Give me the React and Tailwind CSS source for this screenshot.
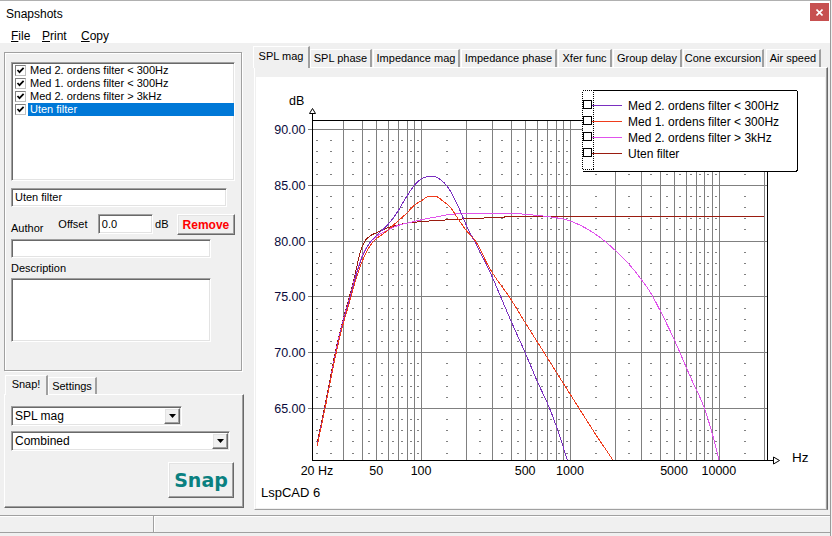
import React from "react";

const L20 = Math.log10(20);
const X = (f) => 317 + (Math.log10(f) - L20) * 148.9;
const Y = (d) => 129.5 + (90 - d) * 11.16;

function curvePath(pts) {
  const xs = pts.map((p) => X(p[0]));
  const ys = pts.map((p) => Y(p[1]));
  const n = xs.length;
  const d = [];
  for (let i = 0; i < n - 1; i++) d.push((ys[i + 1] - ys[i]) / (xs[i + 1] - xs[i]));
  const m = new Array(n);
  m[0] = d[0];
  m[n - 1] = d[n - 2];
  for (let i = 1; i < n - 1; i++) m[i] = d[i - 1] * d[i] <= 0 ? 0 : (d[i - 1] + d[i]) / 2;
  for (let i = 0; i < n - 1; i++) {
    if (d[i] === 0) {
      m[i] = 0;
      m[i + 1] = 0;
      continue;
    }
    const a = m[i] / d[i];
    const b = m[i + 1] / d[i];
    const h = a * a + b * b;
    if (h > 9) {
      const t = 3 / Math.sqrt(h);
      m[i] = t * a * d[i];
      m[i + 1] = t * b * d[i];
    }
  }
  let s = "";
  for (let i = 0; i < n - 1; i++) {
    const h = xs[i + 1] - xs[i];
    const steps = Math.max(2, Math.ceil(h / 0.5));
    for (let k = i === 0 ? 0 : 1; k <= steps; k++) {
      const t = k / steps;
      const t2 = t * t;
      const t3 = t2 * t;
      const y =
        (2 * t3 - 3 * t2 + 1) * ys[i] +
        (t3 - 2 * t2 + t) * h * m[i] +
        (-2 * t3 + 3 * t2) * ys[i + 1] +
        (t3 - t2) * h * m[i + 1];
      const x = xs[i] + t * h;
      s += (s ? "L" : "M") + x.toFixed(2) + "," + y.toFixed(2);
    }
  }
  return s;
}

const UTEN = [
  [20, 61.8], [22, 64.5], [24, 67], [26.5, 70], [30, 73], [33, 75], [36, 77], [39, 79], [42, 80],
  [46, 80.5], [50, 80.75], [60, 81.2], [70, 81.45], [80, 81.6], [100, 81.75], [130, 81.85],
  [200, 82.0], [300, 82.1], [450, 82.2], [1000, 82.2], [2000, 82.2], [5000, 82.2], [10000, 82.2], [20000, 82.2],
];
const MAG = [
  [20, 61.7], [22, 64.3], [24, 66.8], [26.5, 69.8], [30, 72.9], [33, 74.8], [36, 76.7], [40, 78.6],
  [45, 79.8], [50, 80.4], [60, 81.0], [70, 81.4], [80, 81.6], [100, 81.9], [130, 82.2], [160, 82.4],
  [250, 82.5], [400, 82.5], [500, 82.4], [600, 82.3], [800, 82.1], [1000, 81.8], [1300, 81.1],
  [1600, 80.3], [2000, 79.2], [2500, 77.9], [3000, 76.6], [3500, 75.3], [4200, 73.3], [5000, 71.2],
  [6400, 67.9], [8000, 65.0], [9000, 62.8], [10000, 60.4], [10300, 59.7],
];
const PURPLE = [
  [20, 61.7], [22, 64.3], [24, 66.8], [26.5, 69.7], [30, 72.8], [33, 74.7], [36, 76.6], [40, 78.5],
  [45, 79.8], [50, 80.5], [55, 81.0], [60, 81.5], [70, 82.7], [80, 84.0], [93, 85.2], [105, 85.7],
  [120, 85.8], [135, 85.5], [150, 84.9], [160, 84.3], [175, 83.3], [190, 82.2], [200, 81.5],
  [230, 79.9], [277, 77.8], [300, 76.8], [400, 72.9], [500, 70.0], [600, 67.5], [730, 65],
  [850, 62.6], [960, 60.4], [1000, 59.8],
];
const RED = [
  [20, 61.6], [22, 64.2], [24, 66.7], [26.5, 69.6], [30, 72.6], [33, 74.5], [36, 76.3], [40, 78.1],
  [45, 79.5], [50, 80.2], [55, 80.6], [60, 81.0], [70, 81.8], [80, 82.5], [90, 83.2], [100, 83.6],
  [113, 84.0], [125, 84.0], [140, 83.6], [160, 82.9], [175, 82.1], [200, 81.0], [240, 79.7],
  [277, 78.0], [300, 77.2], [400, 74.8], [500, 72.7], [700, 69.6], [841, 67.9], [1153, 65],
  [1500, 62.6], [1936, 60.4], [2000, 60.1],
];

const C_PURPLE = "#7a2fc0";
const C_RED = "#ef3c1c";
const C_MAG = "#e052ec";
const C_UTEN = "#9a1c10";

const vLines = [30, 40, 50, 60, 70, 80, 90, 100, 200, 300, 400, 500, 600, 700, 800, 900, 1000,
  2000, 3000, 4000, 5000, 6000, 7000, 8000, 9000, 10000, 20000];
const dotCols = [20, 25, 35, 45, 55, 65, 75, 85, 95, 150, 250, 350, 450, 550, 650, 750, 850, 950,
  1500, 2500, 3500, 4500, 5500, 6500, 7500, 8500, 9500, 15000];
const majorDb = [90, 85, 80, 75, 70, 65];
const dotRows = [];
for (let d = 61; d <= 89; d++) if (d % 5 !== 0) dotRows.push(d);

const xLabels = [
  [20, "20 Hz"], [50, "50"], [100, "100"], [500, "500"], [1000, "1000"], [5000, "5000"], [10000, "10000"],
];

const legend = [
  [105, C_PURPLE, "Med 2. ordens filter < 300Hz"],
  [121, C_RED, "Med 1. ordens filter < 300Hz"],
  [137, C_MAG, "Med 2. ordens filter > 3kHz"],
  [153, C_UTEN, "Uten filter"],
];

function Chart() {
  const px = (v) => Math.round(v) + 0.5;
  const fy = (d) => Math.floor(Y(d)) + 0.5;
  return (
    <svg width="569" height="431" viewBox="256 77 569 431" className="block">
      <defs>
        <clipPath id="plot">
          <rect x="312" y="120" width="456" height="340" />
        </clipPath>
      </defs>
      <g shapeRendering="crispEdges">
        {dotCols.map((f) =>
          dotRows.map((d) => (
            <rect key={f + "-" + d} x={Math.round(X(f)) - 1} y={Math.floor(Y(d))} width="2" height="1" fill="#808080" />
          ))
        )}
        {vLines.map((f) => (
          <line key={f} x1={px(X(f))} x2={px(X(f))} y1="120" y2="460" stroke="#808080" strokeWidth="1" />
        ))}
        {majorDb.map((d) => (
          <line key={d} x1="308" x2="768" y1={fy(d)} y2={fy(d)} stroke="#808080" strokeWidth="1" />
        ))}
        <line x1="312" x2="768" y1="120.5" y2="120.5" stroke="#000" strokeWidth="1" />
        <line x1="767.5" x2="767.5" y1="120" y2="460" stroke="#000" strokeWidth="1" />
      </g>
      <g clipPath="url(#plot)" fill="none" strokeWidth="1" shapeRendering="crispEdges">
        <path d={curvePath(UTEN)} stroke={C_UTEN} />
        <path d={curvePath(MAG)} stroke={C_MAG} />
        <path d={curvePath(PURPLE)} stroke={C_PURPLE} />
        <path d={curvePath(RED)} stroke={C_RED} />
      </g>
      <g shapeRendering="crispEdges">
        <line x1="312.5" x2="312.5" y1="113" y2="461" stroke="#000" strokeWidth="1" />
        <line x1="312" x2="773" y1="460.5" y2="460.5" stroke="#000" strokeWidth="1" />
      </g>
      <polygon points="312.5,108.5 309.5,113.5 315.5,113.5" fill="#fff" stroke="#000" strokeWidth="1" />
      <polygon points="773.5,457 779.5,460.5 773.5,464" fill="#fff" stroke="#000" strokeWidth="1" />
      <g fontFamily="'Liberation Sans', Arial, sans-serif">
        <text x="289" y="105" fontSize="12.5" fill="#000">dB</text>
        <text x="792" y="462" fontSize="13.5" fill="#000">Hz</text>
        {majorDb.map((d) => (
          <text key={d} x="305.5" y={Y(d) + 4.5} fontSize="12.5" textAnchor="end" fill="#0a0a3c">
            {d.toFixed(2)}
          </text>
        ))}
        {xLabels.map(([f, t]) => (
          <text key={f} x={X(f)} y="474.5" fontSize="12.5" textAnchor="middle" fill="#000">
            {t}
          </text>
        ))}
        <text x="261" y="497" fontSize="13" fill="#000">LspCAD 6</text>
      </g>
      <g shapeRendering="crispEdges">
        <rect x="583" y="91" width="214" height="80" rx="3" fill="#fff" />
        <path d="M594,90.5 H795 Q797.5,90.5 797.5,93 V169 Q797.5,171.5 795,171.5 H583" fill="none" stroke="#000" strokeWidth="1" />
        <rect x="582.5" y="90.5" width="11" height="79" fill="none" stroke="#000" strokeWidth="1" strokeDasharray="1 1" />
        {legend.map(([c, col]) => (
          <g key={c}>
            <rect x="583.5" y={c - 4.5} width="8" height="8" fill="#fff" stroke="#000" strokeWidth="1" />
            <line x1="592" x2="622" y1={c + 0.5} y2={c + 0.5} stroke={col} strokeWidth="1" />
          </g>
        ))}
      </g>
      <g fontFamily="'Liberation Sans', Arial, sans-serif" fontSize="12">
        {legend.map(([c, , t]) => (
          <text key={c} x="628" y={c + 4.5} fill="#000">
            {t}
          </text>
        ))}
      </g>
    </svg>
  );
}

const sunken =
  "border border-t-[#a0a0a0] border-l-[#a0a0a0] border-b-white border-r-white shadow-[inset_1px_1px_0_#696969,inset_-1px_-1px_0_#e3e3e3]";
const raised =
  "border border-t-white border-l-white border-b-[#696969] border-r-[#696969] shadow-[inset_-1px_-1px_0_#a0a0a0,inset_1px_1px_0_#e3e3e3]";

function CheckBox() {
  return (
    <div className="w-[11px] h-[11px] bg-white border border-t-[#808080] border-l-[#808080] border-b-[#c0c0c0] border-r-[#c0c0c0] flex items-center justify-center shrink-0">
      <svg width="9" height="9" viewBox="0 0 9 9">
        <path d="M1.5 4 L3.5 6.2 L7.6 1.8" fill="none" stroke="#000" strokeWidth="1.7" />
      </svg>
    </div>
  );
}

function DropBtn() {
  return (
    <div className={"w-[16px] h-[16px] bg-[#f0f0f0] flex items-center justify-center " + raised}>
      <svg width="7" height="4" viewBox="0 0 7 4">
        <path d="M0 0 H7 L3.5 4 Z" fill="#000" />
      </svg>
    </div>
  );
}

const items = [
  "Med 2. ordens filter < 300Hz",
  "Med 1. ordens filter < 300Hz",
  "Med 2. ordens filter > 3kHz",
  "Uten filter",
];

const tabs = [
  ["SPL mag", 57, 0],
  ["SPL phase", 62, 0],
  ["Impedance mag", 87, 1],
  ["Impedance phase", 96, 1],
  ["Xfer func", 54, 1],
  ["Group delay", 69, 1],
  ["Cone excursion", 81, 1],
  ["Air speed", 55, 2],
];

export default function App() {
  return (
    <div className="w-[832px] h-[536px] bg-[#f0f0f0] overflow-hidden font-['Liberation_Sans',Arial,sans-serif] text-black">
      <div className="w-[831px] h-[536px] flex flex-col border-r border-[#9a9a9a]">
        {/* Title bar */}
        <div className="h-[26px] bg-white flex items-center justify-between pl-[6px] pr-[1px] border-t border-[#b0b0b0]">
          <span className="text-[12px] leading-none">Snapshots</span>
          <div className="self-start mt-[2px] w-[19px] h-[18px] bg-[#c75050] flex items-center justify-center">
            <svg width="7" height="7" viewBox="0 0 7 7">
              <path d="M0.5 0.5 L6.5 6.5 M6.5 0.5 L0.5 6.5" stroke="#fff" strokeWidth="1.6" />
            </svg>
          </div>
        </div>
        {/* Menu bar */}
        <div className="h-[17px] bg-white flex items-center pt-[2px] pl-[11px] text-[12px] leading-none">
          <span className="w-[31px]"><span className="underline">F</span>ile</span>
          <span className="w-[39px]"><span className="underline">P</span>rint</span>
          <span><span className="underline">C</span>opy</span>
        </div>
        {/* Main area */}
        <div className="h-[472px] flex pl-[4px]">
          {/* Left column */}
          <div className="w-[240px] flex flex-col pt-[9px]">
            <div className="w-[238px] h-[319px] border border-[#a0a0a0] shadow-[inset_1px_1px_0_#fff,1px_1px_0_#fff] flex flex-col px-[6px] pt-[9px] text-[11px] leading-none">
              {/* list */}
              <div className={"w-[224px] h-[119px] bg-white pt-[1px] flex flex-col " + sunken}>
                {items.map((t, i) => (
                  <div key={t} className="h-[13px] flex items-center pl-[3px] pr-[0px]">
                    <CheckBox />
                    <div
                      className={
                        "ml-[2px] flex-1 h-[13px] flex items-center pl-[2px] " +
                        (i === 3 ? "bg-[#0078d7] text-white" : "")
                      }
                    >
                      {t}
                    </div>
                  </div>
                ))}
              </div>
              <div className={"mt-[7px] w-[216px] h-[19px] bg-white flex items-center pl-[3px] " + sunken}>
                Uten filter
              </div>
              <div className="mt-[7px] h-[21px] flex">
                <div className="w-[48px] self-end leading-[13px]">Author</div>
                <div className="w-[40px] self-center">Offset</div>
                <div className={"w-[56px] h-[20px] bg-white flex items-center pl-[3px] " + sunken}>0.0</div>
                <div className="w-[24px] self-center pl-[2px]">dB</div>
                <div
                  className={
                    "w-[59px] h-[21px] bg-[#f0f0f0] flex items-center justify-center font-bold text-[12px] text-[#ff0000] " +
                    raised
                  }
                >
                  Remove
                </div>
              </div>
              <div className={"mt-[4px] w-[200px] h-[19px] bg-white " + sunken}></div>
              <div className="mt-[4px] h-[13px] leading-[13px]">Description</div>
              <div className={"mt-[3px] w-[200px] h-[64px] bg-white " + sunken}></div>
            </div>
            {/* lower tabs */}
            <div className="h-[23px] flex items-end pl-[1px] text-[11px] leading-none">
              <div className="relative z-10 w-[43px] h-[20px] -mb-[1px] bg-[#f0f0f0] border-t border-l border-white border-r-2 border-r-[#a0a0a0] flex items-center justify-center pb-[2px]">
                Snap!
              </div>
              <div className="w-[49px] h-[17px] bg-[#f0f0f0] border-t border-l border-white border-r-2 border-r-[#a0a0a0] flex items-center justify-center">
                Settings
              </div>
            </div>
            <div className="w-[240px] h-[114px] border border-t-white border-l-white border-r-[#696969] border-b-[#696969] shadow-[inset_-1px_-1px_0_#a0a0a0] flex flex-col pl-[6px] pt-[11px] text-[12px] leading-none">
              <div className={"w-[171px] h-[20px] bg-white flex items-center justify-between pl-[3px] pr-[1px] " + sunken}>
                <span>SPL mag</span>
                <DropBtn />
              </div>
              <div className={"mt-[5px] w-[219px] h-[20px] bg-white flex items-center justify-between pl-[3px] pr-[1px] " + sunken}>
                <span>Combined</span>
                <DropBtn />
              </div>
              <div
                className={
                  "mt-[11px] self-end mr-[9px] w-[66px] h-[36px] bg-[#f0f0f0] flex items-center justify-center font-['DejaVu_Sans',sans-serif] font-bold text-[19px] text-[#0a8080] " +
                  raised
                }
              >
                Snap
              </div>
            </div>
          </div>
          {/* Right column */}
          <div className="ml-[9px] w-[576px] flex flex-col pt-[3px]">
            <div className="h-[21px] flex items-end text-[11px] leading-none">
              {tabs.map(([t, w, gap], i) => (
                <div
                  key={t}
                  style={{ width: w, marginLeft: gap }}
                  className={
                    "bg-[#f0f0f0] border-t border-l border-white border-r-2 border-r-[#a0a0a0] flex items-center justify-center " +
                    (i === 0 ? "relative z-10 h-[22px] -mb-[1px] pb-[3px]" : "h-[18px]")
                  }
                >
                  {t}
                </div>
              ))}
            </div>
            <div className="ml-[1px] w-[574px] h-[443px] border border-t-white border-l-white border-r-[#696969] border-b-[#a0a0a0] shadow-[inset_-1px_0_0_#a0a0a0] pl-[1px] pt-[9px]">
              <div className="w-[569px] h-[431px] bg-white">
                <Chart />
              </div>
            </div>
          </div>
        </div>
        {/* Status bar */}
        <div className="h-[18px] flex border-t border-b border-[#a0a0a0] shadow-[inset_0_1px_0_#fff]">
          <div className="w-[154px] border-r border-[#a0a0a0] shadow-[1px_0_0_#fff]"></div>
          <div className="flex-1"></div>
        </div>
        <div className="flex-1 bg-[#f0f0f0]"></div>
      </div>
    </div>
  );
}
